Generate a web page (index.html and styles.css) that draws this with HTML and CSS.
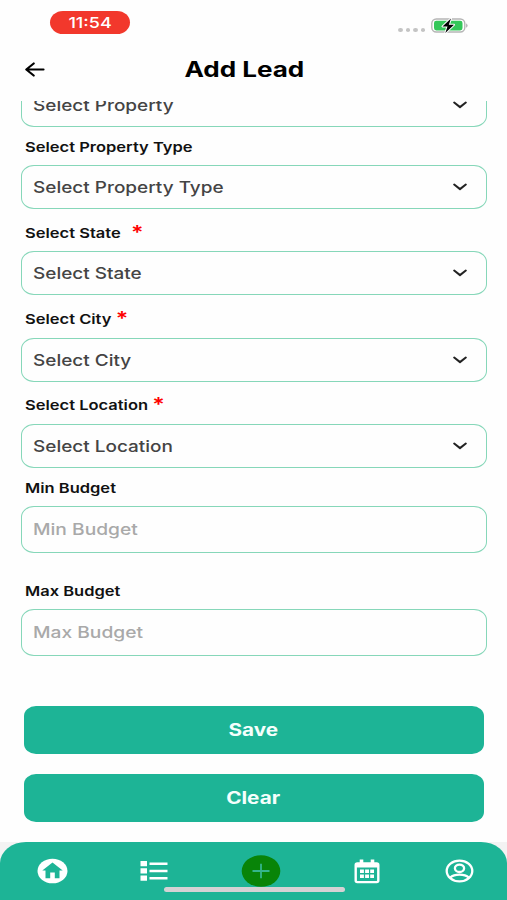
FILE: index.html
```html
<!DOCTYPE html>
<html lang="en">
<head>
<meta charset="utf-8">
<title>Add Lead</title>
<link rel="stylesheet" href="styles.css">
</head>
<body>
<div class="screen">
  <div class="status">
    <div class="time"><span class="wide">11:54</span></div>
    <div class="indicators">
      <div class="dots"><i></i><i></i><i></i><i></i></div>
      <svg width="38" height="18" viewBox="0 0 38 18">
        <rect x=".8" y="2" width="33" height="13" rx="4.5" fill="#fff" stroke="#b5b5b5" stroke-width="1.4"/>
        <rect x="3" y="3.8" width="28.5" height="9.6" rx="2.3" fill="#34c759"/>
        <path d="M35.3 6.2q2.4 2.3 0 4.6z" fill="#999"/>
        <path d="M20 1.5 11.5 9.4h5L14.3 16 23 7.8h-5.2z" fill="#000" stroke="#fff" stroke-width="2" paint-order="stroke" stroke-linejoin="round"/>
      </svg>
    </div>
  </div>
  <header class="header">
    <svg class="back" width="20" height="16" viewBox="0 0 20 16"><path d="M8.700 1.500 1.300 7.500l7.400 6M1.500 7.500h17" fill="none" stroke="#000" stroke-width="2.200" stroke-linecap="round" stroke-linejoin="round"/></svg>
    <h1><span class="wide">Add Lead</span></h1>
  </header>
  <main class="form">
    <div class="box first"><span class="wide">Select Property</span><svg class="chev" viewBox="0 0 14 8"><path d="M1.2 1.500 7 6.100l5.800-4.600"/></svg></div>
    <div class="label type"><span class="wide">Select Property Type</span></div>
    <div class="box"><span class="wide">Select Property Type</span><svg class="chev" viewBox="0 0 14 8"><path d="M1.2 1.500 7 6.100l5.800-4.600"/></svg></div>
    <div class="label state"><span class="wide">Select State <b class="gap">*</b></span></div>
    <div class="box"><span class="wide">Select State</span><svg class="chev" viewBox="0 0 14 8"><path d="M1.2 1.500 7 6.100l5.800-4.600"/></svg></div>
    <div class="label city"><span class="wide">Select City <b>*</b></span></div>
    <div class="box"><span class="wide">Select City</span><svg class="chev" viewBox="0 0 14 8"><path d="M1.2 1.500 7 6.100l5.800-4.600"/></svg></div>
    <div class="label location"><span class="wide">Select Location <b>*</b></span></div>
    <div class="box"><span class="wide">Select Location</span><svg class="chev" viewBox="0 0 14 8"><path d="M1.2 1.500 7 6.100l5.800-4.600"/></svg></div>
    <div class="label min"><span class="wide">Min Budget</span></div>
    <div class="box input"><span class="wide">Min Budget</span></div>
    <div class="label max"><span class="wide">Max Budget</span></div>
    <div class="box input last"><span class="wide">Max Budget</span></div>
    <div class="actions">
      <button><span class="wide">Save</span></button>
      <button><span class="wide">Clear</span></button>
    </div>
  </main>
  <div class="navwrap">
    <nav class="nav">
      <svg class="home" width="31" height="26" viewBox="0 0 31 26"><ellipse cx="15.500" cy="13" rx="15" ry="12.300" fill="#fff"/><path d="M15.500 4.500 5.300 12.600h3.200v7.600h4.700v-5.600h4.600v5.600h4.700v-7.600h3.200z" fill="#1db496"/></svg>
      <svg class="list" width="28" height="20" viewBox="0 0 28 20" fill="#fff"><path d="M.5 0H7v5.200H.5zM.5 7.200H7v5.300H.5zM.5 14.600H7v5.200H.5zM9.500 1.400h18v2.500h-18zM9.500 8.700h18v2.500h-18zM9.500 16h18v2.500h-18z"/></svg>
      <svg class="add" width="40" height="32" viewBox="0 0 40 32"><ellipse cx="20" cy="16" rx="19.300" ry="15.800" fill="#088408"/><path d="M11.500 16h17M20 8.700v14.600" stroke="#35b58c" stroke-width="1.800"/></svg>
      <svg class="calendar" width="26" height="25" viewBox="0 0 26 25"><path d="M7.500.5v5M18.500.5v5" stroke="#fff" stroke-width="3.600"/><rect x="1.700" y="4.500" width="22.600" height="18.600" rx="1.600" fill="none" stroke="#fff" stroke-width="2.400"/><path d="M2 4h22v4.500H2z" fill="#fff"/><path d="M6 12.300h14M6 17.200h14" stroke="#fff" stroke-width="3.500" stroke-dasharray="3.900 1.200"/></svg>
      <svg class="user" width="29" height="24" viewBox="0 0 29 24" fill="none" stroke="#fff" stroke-width="2.300"><ellipse cx="14.500" cy="12" rx="12.800" ry="10.400"/><ellipse cx="14.500" cy="9.300" rx="4.600" ry="3.700"/><path d="M5.200 18.600C7.500 16.500 10.700 15.700 14.500 15.700s7 .8 9.300 2.900"/></svg>
    </nav>
    <div class="homebar"></div>
  </div>
</div>
</body>
</html>
```
FILE: styles.css
```css
* { box-sizing: border-box; }
body { margin: 0; background: #fff; font-family: Inter, "Liberation Sans", sans-serif; }
.screen { width: 507px; height: 900px; display: flex; flex-direction: column; overflow: hidden; background: #fefefe; }
.wide { display: inline-block; transform: scaleX(1.2); transform-origin: left center; white-space: nowrap; }
.status { height: 40px; padding: 11px 38px 0 50px; display: flex; justify-content: space-between; flex: none; }
.time { width: 80px; height: 23px; border-radius: 13px / 11.5px; background: #f2382c; color: #fff; font-size: 15px; font-weight: 500; line-height: 24px; text-align: center; }
.time .wide, h1 .wide, button .wide { transform-origin: center; }
.indicators { display: flex; align-items: flex-start; gap: 6px; padding-top: 6px; }
.dots { display: flex; gap: 3px; padding-top: 11px; }
.dots i { width: 4.500px; height: 4px; border-radius: 50%; background: #c4c4c4; }
.header { height: 61px; flex: none; display: grid; grid-template-columns: 20px 1fr 20px; align-items: center; padding: 0 43px 2px 25px; }
h1 { margin: 0; font-size: 21px; line-height: 28px; font-weight: 700; text-align: center; color: #000; }
h1 .wide { transform: scaleX(1.24); }
.back { display: block; }
.form { height: 741px; flex: none; overflow: hidden; padding: 0 20px 0 21px; display: flex; flex-direction: column; }
.box { height: 44px; flex: none; border: 1.500px solid #86d7b9; border-radius: 13px / 11px; padding: 0 19px 0 11.300px; display: flex; align-items: center; justify-content: space-between; font-size: 16px; line-height: 20px; font-weight: 500; color: #444; }
.box .wide { transform: scaleX(1.185); }
.first { margin-top: -18px; }
.input { height: 47px; padding-bottom: 2px; color: #a9a9a9; }
.input .wide { transform: scaleX(1.2); }
.last { padding-bottom: 0; }
.chev { width: 14px; height: 8px; fill: none; stroke: #222; stroke-width: 2; stroke-linecap: round; stroke-linejoin: round; }
.label { height: 28px; flex: none; padding-left: 4px; font-size: 13.500px; line-height: 20px; font-weight: 600; color: #111; }
.label .wide { transform: scaleX(1.222); }
.label b { color: #f00; font-size: 19px; line-height: 10px; font-weight: 600; margin-left: 0; vertical-align: -1px; }
.label .gap { margin-left: 5px; }
.type { margin-top: 10px; }
.state { margin-top: 14px; }
.city { margin-top: 14px; height: 29px; }
.location { margin-top: 13px; height: 29px; }
.min { margin-top: 10px; }
.max { margin-top: 27.500px; }
.actions { margin: 50px 3px 0 3px; display: flex; flex-direction: column; gap: 20px; }
button { height: 48px; border: 0; border-radius: 12px / 10px; background: #1db496; color: #f4fffc; font: 700 17px/24px Inter, sans-serif; padding: 1px 1px 0 0; }
button .wide { transform: scaleX(1.22); }
.navwrap { height: 58px; flex: none; background: #f3f3f3; position: relative; }
.nav { height: 58px; background: #1db496; border-radius: 26px 26px 0 0 / 21px 21px 0 0; padding-left: 37px; display: flex; align-items: center; }
.nav svg { flex: none; }
.list { margin-left: 72px; }
.add { margin-left: 73px; }
.calendar { margin-left: 72.500px; }
.user { margin-left: 65.500px; }
.homebar { position: absolute; left: 163.500px; top: 45px; width: 181px; height: 5px; border-radius: 3px; background: #d4d2d4; }
```
